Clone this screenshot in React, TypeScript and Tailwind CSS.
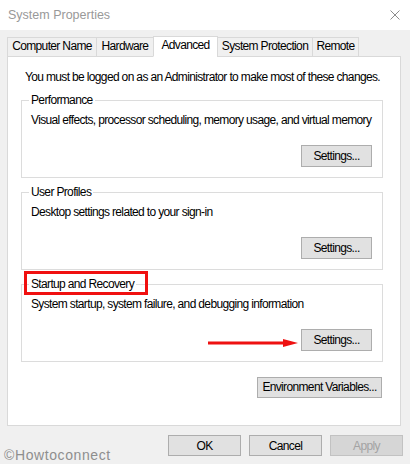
import React from "react";

const font = { fontFamily: '"Liberation Sans", Arial, sans-serif' };

function Btn({ children, className = "" }: { children: React.ReactNode; className?: string }) {
  return (
    <div
      className={
        "flex items-center justify-center whitespace-nowrap border border-[#adadad] bg-[#e1e1e1] text-[12px] leading-none text-black " +
        className
      }
    >
      {children}
    </div>
  );
}

function Group({
  label,
  desc,
  highlight = false,
  arrow = false,
  className = "",
}: {
  label: string;
  desc: string;
  highlight?: boolean;
  arrow?: boolean;
  className?: string;
}) {
  return (
    <div className={"relative flex h-[78px] w-[362px] flex-col border border-[#dcdcdc] px-[9px] pb-[10px] pt-[11px] " + className}>
      <span className="absolute left-[7px] top-[-9px] whitespace-nowrap bg-white px-[2px] text-[12px] leading-[16px]">{label}</span>
      {highlight && (
        <div className="absolute left-[2px] top-[-14px] h-[24px] w-[124px] border-[3px] border-[#f01010]" />
      )}
      <div className="whitespace-nowrap text-[12px] leading-[16px]">{desc}</div>
      <div className="mt-auto flex items-center justify-end pr-[1px]">
        {arrow && (
          <svg width="90" height="10" viewBox="0 0 90 10" className="mr-[3px] mt-[6px]">
            <line x1="0" y1="5" x2="78" y2="5" stroke="#ee1111" strokeWidth="3" />
            <polygon points="75,1 90,5 75,9" fill="#ee1111" />
          </svg>
        )}
        <Btn className="h-[22px] w-[71px]">Settings...</Btn>
      </div>
    </div>
  );
}

export default function App() {
  const tabs = ["Computer Name", "Hardware", "Advanced", "System Protection", "Remote"];
  const widths = ["w-[90px]", "w-[58px]", "w-[65px]", "w-[96px]", "w-[47px]"];
  return (
    <div
      className="relative flex h-[464px] w-[410px] flex-col overflow-hidden bg-[#f0f0f0] tracking-[-0.65px] text-black"
      style={font}
    >
      {/* title bar */}
      <div className="flex h-[30px] items-center justify-between bg-white pl-[8px] pr-[10px]">
        <span className="text-[12.5px] tracking-normal text-[#999999]">System Properties</span>
        <svg width="10" height="10" viewBox="0 0 10 10">
          <path d="M0.5 0.5 L9.5 9.5 M9.5 0.5 L0.5 9.5" stroke="#8c8c8c" strokeWidth="1" />
        </svg>
      </div>

      {/* tabs */}
      <div className="relative z-10 mt-[6px] flex h-[21px] items-end pl-[7px]">
        {tabs.map((t, i) => {
          const sel = i === 2;
          return (
            <div
              key={t}
              className={
                (i > 0 ? "-ml-px " : "") +
                widths[i] +
                " flex items-center justify-center whitespace-nowrap border border-[#d9d9d9] text-[12px] leading-none " +
                (sel ? "h-[21px] border-b-white bg-white pb-[3px]" : "h-[20px] bg-[#f0f0f0] pb-[1px]")
              }
            >
              {t}
            </div>
          );
        })}
      </div>

      {/* panel */}
      <div className="-mt-px ml-[7px] flex h-[371px] w-[394px] flex-col border border-[#d9d9d9] bg-white pl-[13px] pt-[12px]">
        <div className="ml-[4px] whitespace-nowrap text-[12px] leading-[16px]">
          You must be logged on as an Administrator to make most of these changes.
        </div>
        <Group
          className="mt-[15px]"
          label="Performance"
          desc="Visual effects, processor scheduling, memory usage, and virtual memory"
        />
        <Group className="mt-[14px]" label="User Profiles" desc="Desktop settings related to your sign-in" />
        <Group
          className="mt-[14px]"
          label="Startup and Recovery"
          desc="System startup, system failure, and debugging information"
          highlight
          arrow
        />
        <div className="mt-[15px] flex w-[362px] justify-end pr-[1px]">
          <Btn className="h-[21px] w-[125px]">Environment Variables...</Btn>
        </div>
      </div>

      {/* bottom buttons */}
      <div className="mt-[9px] flex items-start justify-between pl-[4px] pr-[7px]">
        <span className="mt-[11px] text-[14px] leading-[18px] tracking-[0.6px] text-[#8e8e8e]">©Howtoconnect</span>
        <div className="flex gap-[8px]">
          <Btn className="h-[21px] w-[73px]">OK</Btn>
          <Btn className="h-[21px] w-[73px]">Cancel</Btn>
          <div className="flex h-[21px] w-[73px] items-center justify-center border border-[#c2c2c2] bg-[#d6d6d6] text-[12px] leading-none text-[#a3a3a3]">
            Apply
          </div>
        </div>
      </div>
    </div>
  );
}
